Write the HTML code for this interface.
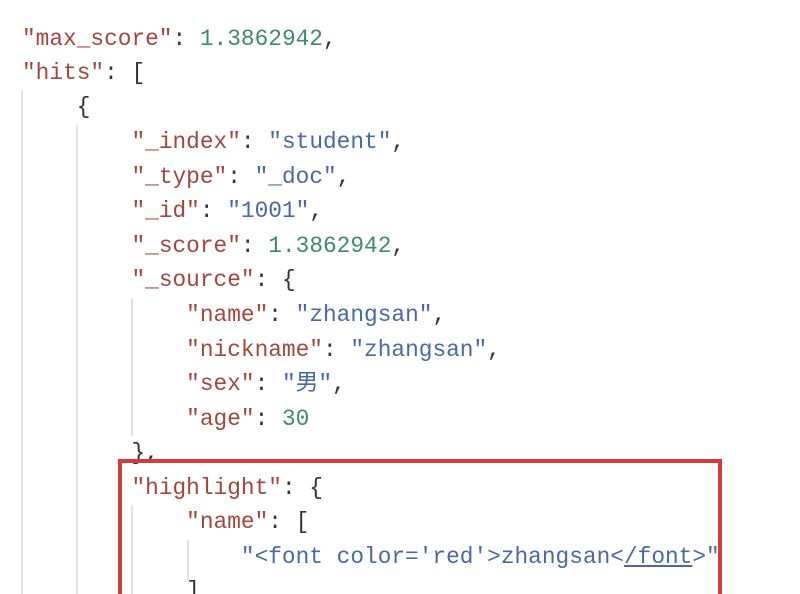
<!DOCTYPE html>
<html style="overflow:hidden;width:800px;height:594px"><head><meta charset="utf-8"><style>
html,body{margin:0;padding:0}
body{background:#fff;width:800px;height:594px;overflow:hidden;font-family:"Liberation Mono","Noto Sans CJK SC",monospace;font-size:22.8px;color:#333}
#w{position:relative;width:800px;height:594px;overflow:hidden}
.l{position:absolute;left:22px;white-space:pre;line-height:34.5px;height:34.5px}
.k{color:#a3463c}.s{color:#4b68a6}.n{color:#3d8a6c}
.g{position:absolute;width:2px;background:#e2e2e2}
.box{position:absolute;left:118px;top:459px;width:596px;height:131px;border:4px solid #d63a3a;border-bottom:none}
</style></head><body><div id="w">
<div class="g" style="left:21px;top:90px;height:504px"></div>
<div class="g" style="left:76px;top:125px;height:469px"></div>
<div class="g" style="left:131px;top:298px;height:138px"></div>
<div class="g" style="left:131px;top:505px;height:89px"></div>
<div class="g" style="left:187px;top:540px;height:40px"></div>
<div class="l" style="top:22px"><span class="k">"max_score"</span>: <span class="n">1.3862942</span>,</div>
<div class="l" style="top:56px"><span class="k">"hits"</span>: [</div>
<div class="l" style="top:90px">    {</div>
<div class="l" style="top:125px">        <span class="k">"_index"</span>: <span class="s">"student"</span>,</div>
<div class="l" style="top:160px">        <span class="k">"_type"</span>: <span class="s">"_doc"</span>,</div>
<div class="l" style="top:194px">        <span class="k">"_id"</span>: <span class="s">"1001"</span>,</div>
<div class="l" style="top:229px">        <span class="k">"_score"</span>: <span class="n">1.3862942</span>,</div>
<div class="l" style="top:263px">        <span class="k">"_source"</span>: {</div>
<div class="l" style="top:298px">            <span class="k">"name"</span>: <span class="s">"zhangsan"</span>,</div>
<div class="l" style="top:333px">            <span class="k">"nickname"</span>: <span class="s">"zhangsan"</span>,</div>
<div class="l" style="top:367px">            <span class="k">"sex"</span>: <span class="s">"男"</span>,</div>
<div class="l" style="top:402px">            <span class="k">"age"</span>: <span class="n">30</span></div>
<div class="l" style="top:436px">        },</div>
<div class="l" style="top:471px">        <span class="k">"highlight"</span>: {</div>
<div class="l" style="top:505px">            <span class="k">"name"</span>: [</div>
<div class="l" style="top:540px">                <span class="s">"&lt;font color='red'&gt;zhangsan&lt;<u>/font</u>&gt;"</span></div>
<div class="l" style="top:574px;height:20px;overflow:hidden">            ]</div>
<div class="box"></div>
</div></body></html>
